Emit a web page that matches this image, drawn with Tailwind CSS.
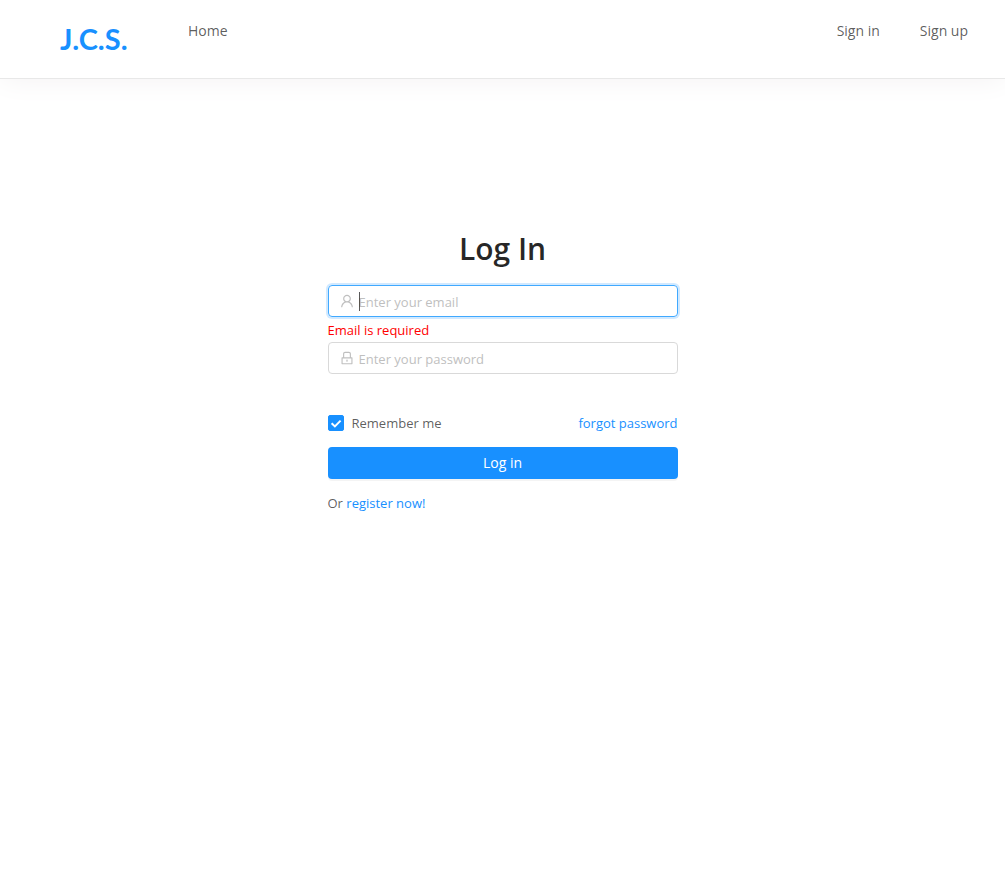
<!DOCTYPE html>
<html lang="en">
<head>
<meta charset="utf-8">
<meta name="viewport" content="width=device-width, initial-scale=1">
<title>Log In</title>
<script src="https://cdn.jsdelivr.net/npm/@tailwindcss/browser@4"></script>
</head>
<body class="min-h-screen bg-white font-['Open_Sans','Noto_Sans',sans-serif] text-sm text-black/65">
<header class="flex items-start justify-between border-b border-[#e8e8e8] pb-4 shadow-[0_0_30px_#f3f1f2]">
  <div class="flex items-start">
    <a href="#" class="ml-5 w-36 pt-5 pl-10 font-[Lato,sans-serif] text-[29px] leading-[38px] font-bold text-[#1890ff]">J.C.S.</a>
    <nav class="flex h-[62px] pt-5 pl-6"><a href="#" class="leading-[22px]">Home</a></nav>
  </div>
  <nav class="flex gap-10 pt-5 pr-[37px] leading-[22px]">
    <a href="#">Sign in</a>
    <a href="#">Sign up</a>
  </nav>
</header>
<main class="mx-auto mt-[150px] w-full max-w-[350px] text-[13px]">
  <h1 class="text-center text-[30px] leading-[40px] font-semibold text-black/85">Log In</h1>
  <form class="mt-4">
    <div class="relative">
      <input id="email" type="email" aria-label="Email" placeholder="Enter your email" class="block h-8 w-full rounded border border-[#40a9ff] pt-0.5 pr-3 pl-[30px] shadow-[0_0_0_2px_rgba(24,144,255,0.2)] outline-none placeholder:text-[#bfbfbf]">
      <svg class="pointer-events-none absolute top-[9px] left-3 size-3.5 fill-black/25" viewBox="64 64 896 896" aria-hidden="true"><path d="M858.5 763.6a374 374 0 0 0-80.6-119.5 375.63 375.63 0 0 0-119.5-80.6c-.4-.2-.8-.3-1.2-.5C719.5 518 760 444.7 760 362c0-137-111-248-248-248S264 225 264 362c0 82.7 40.5 156 102.8 201.1-.4.2-.8.3-1.2.5-44.8 18.9-85 46-119.5 80.6a375.63 375.63 0 0 0-80.6 119.5A371.7 371.7 0 0 0 136 901.8a8 8 0 0 0 8 8.2h60c4.4 0 7.9-3.5 8-7.8 2-77.2 33-149.5 87.8-204.3 56.7-56.7 132-87.9 212.2-87.9s155.5 31.2 212.2 87.9C779 752.7 810 825 812 902.2c.1 4.4 3.6 7.8 8 7.8h60a8 8 0 0 0 8-8.2c-1-47.8-10.9-94.3-29.5-138.2zM512 534c-45.9 0-89.1-17.9-121.6-50.4S340 407.9 340 362c0-45.9 17.9-89.1 50.4-121.6S466.1 190 512 190s89.1 17.9 121.6 50.4S684 316.1 684 362c0 45.9-17.9 89.1-50.4 121.6S557.9 534 512 534z"/></svg>
      <span class="pointer-events-none absolute top-[7px] left-[31px] h-[19px] w-px bg-black/65"></span>
    </div>
    <p class="pt-[3px] pb-px leading-[21px] text-[#ff0000]">Email is required</p>
    <div class="relative">
      <input id="password" type="password" aria-label="Password" placeholder="Enter your password" class="block h-8 w-full rounded border border-[#d9d9d9] pt-0.5 pr-3 pl-[30px] outline-none placeholder:text-[#bfbfbf]">
      <svg class="pointer-events-none absolute top-[9px] left-3 size-3.5 fill-black/25" viewBox="64 64 896 896" aria-hidden="true"><path d="M832 464h-68V240c0-70.7-57.3-128-128-128H388c-70.7 0-128 57.3-128 128v224h-68c-17.7 0-32 14.3-32 32v384c0 17.7 14.3 32 32 32h640c17.7 0 32-14.3 32-32V496c0-17.7-14.3-32-32-32zM332 240c0-30.9 25.1-56 56-56h248c30.9 0 56 25.1 56 56v224H332V240zm460 600H232V536h560v304zM484 701v53c0 4.4 3.6 8 8 8h40c4.4 0 8-3.6 8-8v-53a48.01 48.01 0 1 0-56 0z"/></svg>
    </div>
    <div class="mt-[38px] flex items-center justify-between leading-[22px]">
      <label class="flex items-center gap-2">
        <span class="grid size-4">
          <input type="checkbox" checked class="peer col-start-1 row-start-1 size-4 appearance-none rounded-xs border border-[#d9d9d9] checked:border-[#1890ff] checked:bg-[#1890ff]">
          <svg class="pointer-events-none invisible col-start-1 row-start-1 size-4 fill-none stroke-white stroke-2 peer-checked:visible" viewBox="0 0 16 16" aria-hidden="true"><path d="M3.6 8.2 6.9 11.4 12.6 5.6"/></svg>
        </span>
        Remember me
      </label>
      <a href="#" class="text-[#1890ff]">forgot password</a>
    </div>
    <button type="submit" class="mt-[13px] block h-8 w-full rounded bg-[#1890ff] text-sm text-white shadow-[0_2px_0_rgba(0,0,0,0.045)]">Log in</button>
    <p class="mt-[13px] leading-[22px]">Or <a href="#" class="text-[#1890ff]">register now!</a></p>
  </form>
</main>
</body>
</html>
